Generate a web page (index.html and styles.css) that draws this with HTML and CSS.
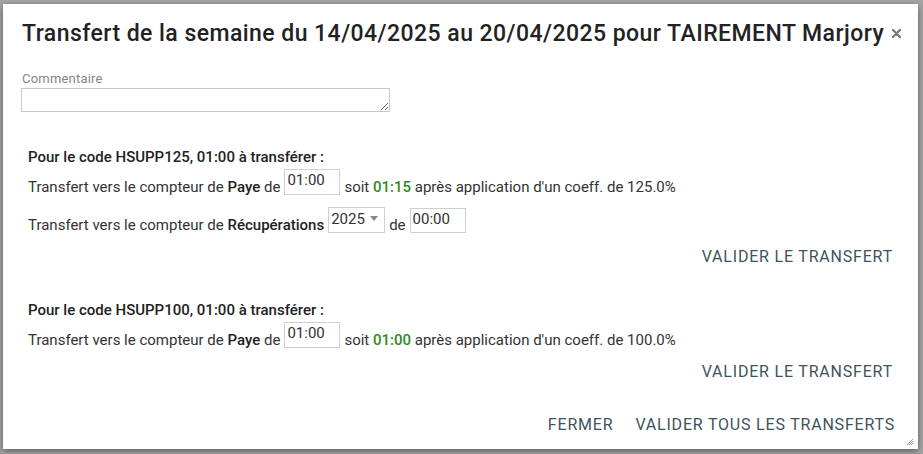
FILE: index.html
```html
<!DOCTYPE html>
<html lang="fr">
<head>
<meta charset="UTF-8">
<meta name="viewport" content="width=device-width, initial-scale=1.0">
<title>Transfert</title>
<link rel="stylesheet" href="styles.css">
</head>
<body>

<div class="page">
  <div class="dialog">
    <div class="dialog-header">
      <h1 class="dialog-title">Transfert de la semaine du 14/04/2025 au 20/04/2025 pour TAIREMENT Marjory</h1>
      <span class="dialog-close">
        <svg width="9" height="9" viewBox="0 0 9 9"><path d="M1 1 L8 8 M8 1 L1 8" stroke="#7c7c7c" stroke-width="2.4" stroke-linecap="round"/></svg>
      </span>
    </div>

    <div class="dialog-body">
      <label class="comment-label">Commentaire</label>
      <textarea class="comment-input"></textarea>

      <div class="transfer first">
        <div class="transfer-code">Pour le code HSUPP125, 01:00 à transférer :</div>
        <div class="transfer-row">
          <span>Transfert vers le compteur de <b>Paye</b> de</span>
          <input class="time-input" type="text" value="01:00">
          <span>soit <b class="result">01:15</b> après application d'un coeff. de 125.0%</span>
        </div>
        <div class="transfer-row second">
          <span>Transfert vers le compteur de <b>Récupérations</b></span>
          <span class="year-select">
            <select>
              <option>2025</option>
              <option>2024</option>
            </select>
          </span>
          <span>de</span>
          <input class="time-input short" type="text" value="00:00">
        </div>
        <div class="transfer-actions">
          <button class="flat-btn">Valider le transfert</button>
        </div>
      </div>

      <div class="transfer">
        <div class="transfer-code">Pour le code HSUPP100, 01:00 à transférer :</div>
        <div class="transfer-row">
          <span>Transfert vers le compteur de <b>Paye</b> de</span>
          <input class="time-input" type="text" value="01:00">
          <span>soit <b class="result">01:00</b> après application d'un coeff. de 100.0%</span>
        </div>
        <div class="transfer-actions">
          <button class="flat-btn">Valider le transfert</button>
        </div>
      </div>
    </div>

    <div class="dialog-footer">
      <button class="flat-btn">Fermer</button>
      <button class="flat-btn">Valider tous les transferts</button>
    </div>

    <span class="resize-grip">
      <svg width="6" height="6" viewBox="0 0 6 6"><path d="M6 0 L0 6 M6 2 L2 6 M6 4 L4 6" stroke="#888" stroke-width="0.8"/></svg>
    </span>
  </div>
</div>

</body>
</html>
```

FILE: styles.css
```css
body {
  margin: 0;
  font-family: Roboto, "Liberation Sans", Arial, sans-serif;
  background: #a4a4a4;
  height: 454px;
  overflow: hidden;
}
.page {
  padding: 4px 0 0 3px;
}
.dialog {
  position: relative;
  width: 915px;
  height: 445px;
  background: #fff;
  box-shadow: 0 2px 6px rgba(0, 0, 0, 0.45);
  box-sizing: border-box;
  color: #333;
}
.dialog-header {
  display: flex;
  justify-content: space-between;
  align-items: flex-start;
  padding: 17px 17px 0 19px;
}
.dialog-title {
  margin: 0;
  font-size: 23px;
  line-height: 26px;
  font-weight: 500;
  letter-spacing: 0.45px;
  color: #222;
}
.dialog-close {
  margin-top: 8px;
  line-height: 0;
  cursor: pointer;
}
.dialog-body {
  padding: 0 25px 0 18px;
}
.comment-label {
  display: block;
  margin: 24px 0 0 1px;
  font-size: 13px;
  line-height: 15px;
  letter-spacing: 0.2px;
  color: #858585;
}
.comment-input {
  display: block;
  margin-top: 2px;
  width: 369px;
  height: 24px;
  box-sizing: border-box;
  border: 1px solid #c8c8c8;
  border-radius: 0;
  padding: 2px;
  font-family: inherit;
}
.transfer {
  padding-left: 7px;
  margin-top: 36px;
}
.transfer.first {
  margin-top: 37px;
}
.transfer-code {
  font-size: 15px;
  line-height: 17px;
  font-weight: 500;
  color: #222;
}
.transfer-row {
  display: flex;
  align-items: flex-end;
  margin-top: 3px;
  font-size: 15px;
  line-height: 16px;
  white-space: nowrap;
}
.transfer-row.second {
  margin-top: 12px;
}
.transfer-row b {
  font-weight: 500;
  color: #222;
}
.transfer-row b.result {
  color: #2e8b22;
}
.time-input {
  width: 56px;
  height: 26px;
  box-sizing: border-box;
  margin: 0 4px;
  padding: 0 2px 4px;
  border: 1px solid #cfcfcf;
  font-family: inherit;
  font-size: 15px;
  color: #333;
}
.time-input.short {
  height: 25px;
  margin-right: 0;
}
.year-select {
  position: relative;
  margin: 0 4px;
}
.year-select select {
  appearance: none;
  width: 57px;
  height: 26px;
  border: 1px solid #cfcfcf;
  border-radius: 0;
  background: #fff;
  padding: 0 2px 2px;
  font-family: inherit;
  font-size: 15px;
  color: #333;
  display: block;
}
.year-select::after {
  content: "";
  position: absolute;
  right: 7px;
  top: 9px;
  border-left: 4px solid transparent;
  border-right: 4px solid transparent;
  border-top: 5px solid #888;
  pointer-events: none;
}
.transfer-actions {
  display: flex;
  justify-content: flex-end;
  margin-top: 14px;
}
.flat-btn {
  background: none;
  border: none;
  padding: 0;
  font-family: inherit;
  font-size: 16px;
  line-height: 19px;
  letter-spacing: 0.8px;
  text-transform: uppercase;
  color: #3e535d;
  cursor: pointer;
}
.dialog-footer {
  display: flex;
  justify-content: flex-end;
  gap: 22px;
  margin-top: 34px;
  padding-right: 23px;
}
.resize-grip {
  position: absolute;
  right: 5px;
  bottom: 4px;
  line-height: 0;
}
```
